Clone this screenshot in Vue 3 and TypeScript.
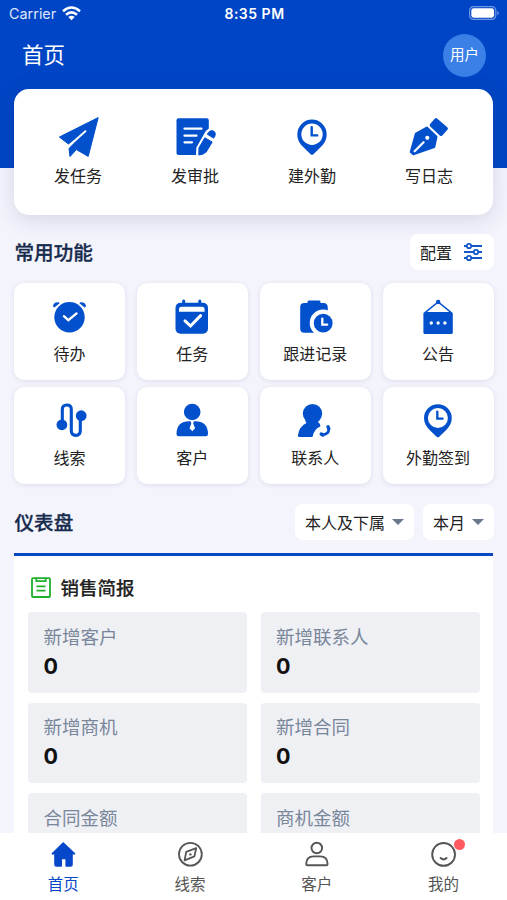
<script setup lang="ts">
interface Entry {
  icon: string
  label: string
}

const quickActions: Entry[] = [
  { icon: 'plane', label: '发任务' },
  { icon: 'approval', label: '发审批' },
  { icon: 'pin', label: '建外勤' },
  { icon: 'pen', label: '写日志' },
]

const features: Entry[] = [
  { icon: 'alarm', label: '待办' },
  { icon: 'calendar', label: '任务' },
  { icon: 'followup', label: '跟进记录' },
  { icon: 'notice', label: '公告' },
  { icon: 'leads', label: '线索' },
  { icon: 'customer', label: '客户' },
  { icon: 'contact', label: '联系人' },
  { icon: 'checkin', label: '外勤签到' },
]

const filters: string[] = ['本人及下属', '本月']

const stats: { label: string; value?: number }[] = [
  { label: '新增客户', value: 0 },
  { label: '新增联系人', value: 0 },
  { label: '新增商机', value: 0 },
  { label: '新增合同', value: 0 },
  { label: '合同金额' },
  { label: '商机金额' },
]

const tabs: (Entry & { active?: boolean; dot?: boolean })[] = [
  { icon: 'home', label: '首页', active: true },
  { icon: 'compass', label: '线索' },
  { icon: 'person', label: '客户' },
  { icon: 'mine', label: '我的', dot: true },
]
</script>

<template>
  <svg class="sprite" width="0" height="0">
    <symbol id="plane" viewBox="0 0 42 42">
      <path d="M41.2 1.6 31.2 40.4 19.4 33.6 13 40.6 12 32.6 28.6 15.2 11.4 28 2.4 21Z" fill="currentColor" stroke="currentColor" stroke-width="1" stroke-linejoin="round" />
      <path d="M28.4 15.2 11.2 30.4" stroke="#fff" stroke-width="2" stroke-linecap="round" />
    </symbol>
    <symbol id="approval" viewBox="0 0 42 42">
      <rect x="2.5" y="2.3" width="32.3" height="36.7" rx="2" fill="currentColor" />
      <path d="M10.5 12.7H27.5M10.5 19.7H22.5M10.5 26.3H18" stroke="#fff" stroke-width="2.2" stroke-linecap="round" />
      <path d="M21.8 42 22.4 31.5 31.5 15.5Q35 10.500 42 13V42Z" fill="#fff" />
      <path d="M24.8 39 25 31.8 30.8 21.800 38.200 26 32.200 36Q29 39 24.800 39Z" fill="currentColor" stroke="currentColor" stroke-width="1" stroke-linejoin="round" />
      <path d="M33.200 18.200 34.600 16.200Q36.800 13.400 40 15.200 42.400 17.200 40.800 20.400L39.600 22.200Z" fill="currentColor" stroke="currentColor" stroke-width=".8" stroke-linejoin="round" />
    </symbol>
    <symbol id="pin" viewBox="0 0 42 42">
      <path d="M21 3.6A14.7 14.7 0 0 0 6.3 18.3C6.3 24 9 28 12.5 31.3L19.6 38.2Q21 39.3 22.4 38.2L29.5 31.3C33 28 35.7 24 35.7 18.3A14.7 14.7 0 0 0 21 3.6Z" fill="currentColor" />
      <circle cx="21" cy="18.3" r="10.7" fill="#fff" />
      <path d="M20.7 11.2V19.4H26.2" fill="none" stroke="currentColor" stroke-width="2.4" stroke-linecap="round" />
    </symbol>
    <symbol id="pen" viewBox="0 0 42 42">
      <path d="M28 3.9 38.2 12.5 33 18.3 23.4 9.2Z" fill="currentColor" stroke="currentColor" stroke-width="3.4" stroke-linejoin="round" />
      <path d="M18.8 11.6 28.4 20.8 26.2 30.9 5.4 38.2 2.8 36 8 17.6Z" fill="currentColor" stroke="currentColor" stroke-width="2.2" stroke-linejoin="round" />
      <path d="M6.6 35.2 15.6 26.2" stroke="#fff" stroke-width="2.2" stroke-linecap="round" />
      <circle cx="19.3" cy="21.8" r="2.1" fill="#fff" />
    </symbol>
    <symbol id="alarm" viewBox="0 0 36 36">
      <circle cx="18.5" cy="18.3" r="15.2" fill="currentColor" />
      <path d="M2.2 7.8Q1.6 3 7.6 3.2L8.6 4.2 3.4 8.6ZM34.8 7.8Q35.4 3 29.4 3.2L28.4 4.2 33.6 8.6Z" fill="currentColor" />
      <path d="M12.9 17.2 17.3 21.2 25.6 14.4" fill="none" stroke="#fff" stroke-width="2.3" stroke-linecap="round" />
    </symbol>
    <symbol id="calendar" viewBox="0 0 36 36">
      <rect x="1.5" y="3.8" width="32.5" height="31" rx="5" fill="currentColor" />
      <path d="M9.7 2V6M25.8 2V6" stroke="currentColor" stroke-width="3" stroke-linecap="round" />
      <path d="M5 12.7V10.4Q5 7.8 7.6 7.8H28Q30.6 7.8 30.6 10.4V12.7Z" fill="#fff" />
      <path d="M11 21.9 16.5 27 26.6 16.6" fill="none" stroke="#fff" stroke-width="3" stroke-linecap="round" />
    </symbol>
    <symbol id="followup" viewBox="0 0 36 36">
      <path d="M7.5 4H10.5V3Q10.5 1.6 12 1.6H22Q23.5 1.6 23.5 3V4H26.5Q30.8 4 30.8 9V24H22V33.7H7.2Q3.2 33.7 3.2 29.7V8Q3.2 4 7.5 4Z" fill="currentColor" />
      <circle cx="26.2" cy="24" r="13.5" fill="#fff" />
      <circle cx="26.2" cy="24.2" r="9.4" fill="currentColor" />
      <path d="M25.3 19.6V25.6H30.2" fill="none" stroke="#fff" stroke-width="2.3" stroke-linecap="round" />
    </symbol>
    <symbol id="notice" viewBox="0 0 36 36">
      <rect x="3.4" y="13.1" width="29.4" height="22" rx="1.6" fill="currentColor" />
      <path d="M5 13.6 18.2 3 31.2 13.6" fill="none" stroke="currentColor" stroke-width="1.4" />
      <circle cx="18.2" cy="3" r="2.2" fill="currentColor" />
      <g fill="#fff"><circle cx="11.3" cy="24" r="1.7" /><circle cx="18.1" cy="24" r="1.7" /><circle cx="24.9" cy="24" r="1.7" /></g>
    </symbol>
    <symbol id="leads" viewBox="0 0 36 36">
      <path d="M11.3 22V6.4Q11.3 2 15.8 2T20.3 6.4V27.8Q20.3 32.4 24.8 32.4T29.3 27.8V13" fill="none" stroke="currentColor" stroke-width="3.1" />
      <circle cx="10.9" cy="21.8" r="5.4" fill="currentColor" />
      <circle cx="30.2" cy="12.7" r="5.4" fill="currentColor" />
    </symbol>
    <symbol id="customer" viewBox="0 0 36 36">
      <circle cx="18.2" cy="9" r="8.3" fill="currentColor" />
      <path d="M2.5 31Q2.5 18.2 15.5 18.2H21Q34 18.2 34 31 34 33.2 31.7 33.2H4.8Q2.5 33.2 2.5 31Z" fill="currentColor" />
      <path d="M16.5 17.8H20L19.2 20.4 21.1 25.2 18.3 28.3 15.5 25.2 17.3 20.4Z" fill="#fff" />
    </symbol>
    <symbol id="contact" viewBox="0 0 36 36">
      <circle cx="15.5" cy="10.6" r="9.7" fill="currentColor" />
      <path d="M8 17.4H21L21.4 19.600Q23.600 20.800 23.400 23.400 17 25.800 15.400 34H2.4Q.7 34 .9 32.4 2 23.5 9.5 20Z" fill="currentColor" />
      <path d="M31.600 24.400Q33 31.400 24.800 31.800" fill="none" stroke="currentColor" stroke-width="2.600" />
      <path d="M31 23.800 31.800 25.600M24.200 31 25.800 32" stroke="currentColor" stroke-width="3.400" stroke-linecap="round" />
    </symbol>
    <symbol id="checkin" viewBox="0 0 36 36">
      <path d="M17.9 1.2A13.9 13.9 0 0 0 4 15.1C4 20 6.2 23.6 9.6 27L16.6 33.7Q17.9 34.8 19.2 33.7L26.2 27C29.6 23.6 31.8 20 31.8 15.1A13.9 13.9 0 0 0 17.9 1.2Z" fill="currentColor" />
      <circle cx="17.9" cy="15" r="10" fill="#fff" />
      <path d="M17.3 8.6V15.7H22.6" fill="none" stroke="currentColor" stroke-width="2.3" stroke-linecap="round" />
    </symbol>
    <symbol id="home" viewBox="0 0 26 26">
      <path d="M13.2 2 24.600 12.8H22V23.6Q22 25 20.6 25H16.2V17.5H11.200V25H6.500Q5 25 5 23.6V12.8H2.300Z" fill="currentColor" stroke="currentColor" stroke-width="1.6" stroke-linejoin="round" />
    </symbol>
    <symbol id="compass" viewBox="0 0 26 26">
      <g fill="none" stroke="currentColor" stroke-width="1.8" stroke-linejoin="round">
        <circle cx="13.4" cy="13.2" r="11.4" />
        <path d="M19.2 7.2 17.4 15.4 7.6 19.4 9.2 10.8Z" />
      </g>
      <circle cx="13.4" cy="13.4" r="1.2" fill="currentColor" />
    </symbol>
    <symbol id="person" viewBox="0 0 26 26">
      <g fill="none" stroke="currentColor" stroke-width="1.9">
        <circle cx="12.8" cy="7" r="5.3" />
        <path d="M2.2 23.2Q2.2 15.4 9.6 15.4H16.2Q23.6 15.4 23.6 23.2 23.6 24.2 22.4 24.2H3.4Q2.2 24.2 2.2 23.2Z" />
      </g>
    </symbol>
    <symbol id="mine" viewBox="0 0 26 26">
      <g fill="none" stroke="currentColor" stroke-width="1.9" stroke-linecap="round">
        <circle cx="12.6" cy="13.4" r="11.4" />
        <path d="M9.600 17Q12.600 19.8 15.600 17" />
      </g>
    </symbol>
  </svg>

  <div class="screen">
    <div class="status">
      <div class="carrier">
        <span>Carrier</span>
        <svg width="19" height="15" viewBox="0 0 19 15">
          <g fill="none" stroke="#fff" stroke-width="2.5">
            <path d="M1 5.3Q9.5-2.3 18 5.3" />
            <path d="M4 8.8Q9.5 4 15 8.8" />
          </g>
          <path d="M6.3 11.1Q9.5 8.5 12.7 11.1L9.5 14.3Z" fill="#fff" />
        </svg>
      </div>
      <span class="clock">8:35 PM</span>
      <svg class="battery" width="31" height="14" viewBox="0 0 31 14">
        <rect x=".6" y=".6" width="26.2" height="12.8" rx="4" fill="none" stroke="#6f98e3" stroke-width="1.2" />
        <rect x="2.3" y="2.3" width="22.8" height="9.4" rx="2.4" fill="#fff" />
        <path d="M28.3 4.7Q31.5 7 28.3 9.3Z" fill="#6f98e3" />
      </svg>
    </div>

    <header class="topbar">
      <h1>首页</h1>
      <div class="avatar">用户</div>
    </header>

    <section class="quick">
      <div v-for="item in quickActions" :key="item.label" class="quick-item">
        <svg width="42" height="42"><use :href="'#' + item.icon" /></svg>
        <span>{{ item.label }}</span>
      </div>
    </section>

    <div class="heading feature-heading">
      <h2>常用功能</h2>
      <div class="chip config">
        <span>配置</span>
        <svg width="20" height="20" viewBox="0 0 20 20">
          <g fill="none" stroke="#1458cc" stroke-width="1.8">
            <path d="M1 4H3.5M8.5 4H19M1 10H10.5M15.5 10H19M1 16H3.5M8.5 16H19" />
            <circle cx="6" cy="4" r="2.2" />
            <circle cx="13" cy="10" r="2.2" />
            <circle cx="6" cy="16" r="2.2" />
          </g>
        </svg>
      </div>
    </div>

    <section class="features">
      <div v-for="item in features" :key="item.label" class="feature">
        <svg width="36" height="36"><use :href="'#' + item.icon" /></svg>
        <span>{{ item.label }}</span>
      </div>
    </section>

    <div class="heading dashboard-heading">
      <h2>仪表盘</h2>
      <div class="filters">
        <div v-for="name in filters" :key="name" class="chip filter">
          <span>{{ name }}</span>
          <i class="caret"></i>
        </div>
      </div>
    </div>

    <section class="report">
      <div class="report-title">
        <svg width="20" height="21" viewBox="0 0 20 21">
          <g fill="none" stroke="#1fb02c" stroke-width="1.8">
            <rect x="1" y="1.2" width="18" height="18.8" rx="1" />
            <path d="M5.3 1.3V4.2H14.7V1.3M5.5 9.3H14.5M5.5 13.6H14.5" />
          </g>
        </svg>
        <h3>销售简报</h3>
      </div>
      <div class="stats">
        <div v-for="stat in stats" :key="stat.label" class="stat">
          <span class="stat-label">{{ stat.label }}</span>
          <strong v-if="stat.value !== undefined">{{ stat.value }}</strong>
        </div>
      </div>
    </section>

    <nav class="tabs">
      <div v-for="tab in tabs" :key="tab.label" class="tab" :class="{ active: tab.active }">
        <div class="tab-icon">
          <svg width="26" height="26"><use :href="'#' + tab.icon" /></svg>
          <i v-if="tab.dot" class="dot"></i>
        </div>
        <span>{{ tab.label }}</span>
      </div>
    </nav>
  </div>
</template>

<style>
body {
  overflow: hidden;
}
</style>

<style scoped>
.sprite {
  position: absolute;
}
.screen {
  box-sizing: border-box;
  height: 900px;
  overflow: hidden;
  display: flex;
  flex-direction: column;
  background: linear-gradient(#0045c5 168px, #f3f4fc 168px);
  font-family: Inter, "Noto Sans CJK SC", sans-serif;
  color: #222;
}
svg {
  display: block;
  flex: none;
}
h1,
h2,
h3 {
  margin: 0;
}
.status {
  flex: none;
  height: 28px;
  display: grid;
  grid-template-columns: 1fr auto 1fr;
  align-items: center;
  padding: 0 7px 0 9px;
  color: #fff;
}
.carrier {
  display: flex;
  align-items: center;
  gap: 6px;
  font-size: 14.4px;
  line-height: 20px;
  color: #dce7fb;
}
.carrier svg {
  margin-top: -2px;
}
.clock {
  font-size: 14px;
  font-weight: 600;
  letter-spacing: 0.5px;
  padding-bottom: 2px;
}
.battery {
  justify-self: end;
  margin-top: -2px;
}
.topbar {
  flex: none;
  height: 61px;
  box-sizing: border-box;
  padding: 0 21px 7px 22px;
  display: flex;
  align-items: center;
  justify-content: space-between;
  color: #fff;
}
h1 {
  font-size: 21.5px;
  font-weight: 400;
  padding-bottom: 3px;
}
.avatar {
  width: 43px;
  height: 43px;
  box-sizing: border-box;
  padding-bottom: 3px;
  border-radius: 50%;
  background: #3b80e6;
  display: flex;
  align-items: center;
  justify-content: center;
  font-size: 14.5px;
}
.quick {
  flex: none;
  height: 126px;
  box-sizing: border-box;
  margin: 0 14px;
  padding: 27px 5.5px 0;
  display: grid;
  grid-template-columns: repeat(4, 1fr);
  background: #fff;
  border-radius: 15px;
  box-shadow: 0 5px 22px rgba(40, 50, 90, 0.15);
}
.quick-item,
.feature {
  display: flex;
  flex-direction: column;
  align-items: center;
  font-size: 16px;
  line-height: 24px;
}
.quick-item svg,
.feature svg {
  color: #0350cd;
}
.quick-item span {
  margin-top: 6px;
}
.heading {
  flex: none;
  height: 36px;
  margin: 0 13px 0 14.5px;
  display: flex;
  align-items: center;
  justify-content: space-between;
}
h2 {
  font-size: 19.6px;
  font-weight: 500;
  color: #172b4d;
  padding-bottom: 2px;
  -webkit-text-stroke: 0.3px #172b4d;
}
.feature-heading {
  margin-top: 19px;
}
.chip {
  height: 36px;
  box-sizing: border-box;
  padding-bottom: 1px;
  display: flex;
  align-items: center;
  justify-content: space-between;
  background: #fff;
  border-radius: 8px;
  font-size: 16px;
}
.config {
  width: 84px;
  padding: 0 11px 1px 10px;
}
.features {
  flex: none;
  margin: 13px 13.5px 0 14px;
  display: grid;
  grid-template-columns: repeat(4, 1fr);
  grid-auto-rows: 97px;
  gap: 7px 12px;
}
.feature {
  padding-top: 16px;
  box-sizing: border-box;
  background: #fff;
  border-radius: 10px;
  box-shadow: 0 1px 5px rgba(40, 50, 90, 0.11);
}
.feature span {
  margin-top: 7px;
}
.dashboard-heading {
  margin-top: 20px;
}
.filters {
  display: flex;
  gap: 9px;
}
.filter {
  padding: 0 10px 1px;
  gap: 7px;
}
.caret {
  border: 6px solid transparent;
  border-top: 6.5px solid #6b778c;
  border-bottom: 0;
}
.report {
  flex: 1;
  min-height: 0;
  overflow: hidden;
  box-sizing: border-box;
  margin: 13px 14px 0;
  padding: 0 13.5px 0 14px;
  border-top: 3px solid #0747bf;
  background: #fff;
}
.report-title {
  height: 56px;
  box-sizing: border-box;
  padding: 7px 0 0 3px;
  display: flex;
  align-items: center;
  gap: 9.5px;
}
h3 {
  font-size: 18.5px;
  font-weight: 500;
  padding-bottom: 1px;
  -webkit-text-stroke: 0.2px #222;
}
.stats {
  display: grid;
  grid-template-columns: 1fr 1fr;
  grid-auto-rows: 80.5px;
  gap: 10px 13.5px;
}
.stat {
  display: flex;
  flex-direction: column;
  background: #eef0f4;
  border-radius: 4px;
  padding: 10.5px 15.5px 0;
  box-sizing: border-box;
}
.stat-label {
  font-size: 18.5px;
  line-height: 28px;
  color: #7a869a;
}
.stat strong {
  font-size: 21.5px;
  line-height: 30px;
  font-weight: 700;
  color: #111;
}
.tabs {
  flex: none;
  height: 67px;
  display: grid;
  grid-template-columns: repeat(4, 1fr);
  background: #fff;
}
.tab {
  display: flex;
  flex-direction: column;
  align-items: center;
  padding-top: 8px;
  font-size: 15.5px;
  line-height: 22px;
  color: #555;
}
.tab.active {
  color: #0747c9;
}
.tab > span {
  margin-top: 7px;
}
.tab-icon {
  position: relative;
}
.dot {
  position: absolute;
  top: -2px;
  right: -8px;
  width: 11px;
  height: 11px;
  border-radius: 50%;
  background: #ff5a5f;
}
</style>
